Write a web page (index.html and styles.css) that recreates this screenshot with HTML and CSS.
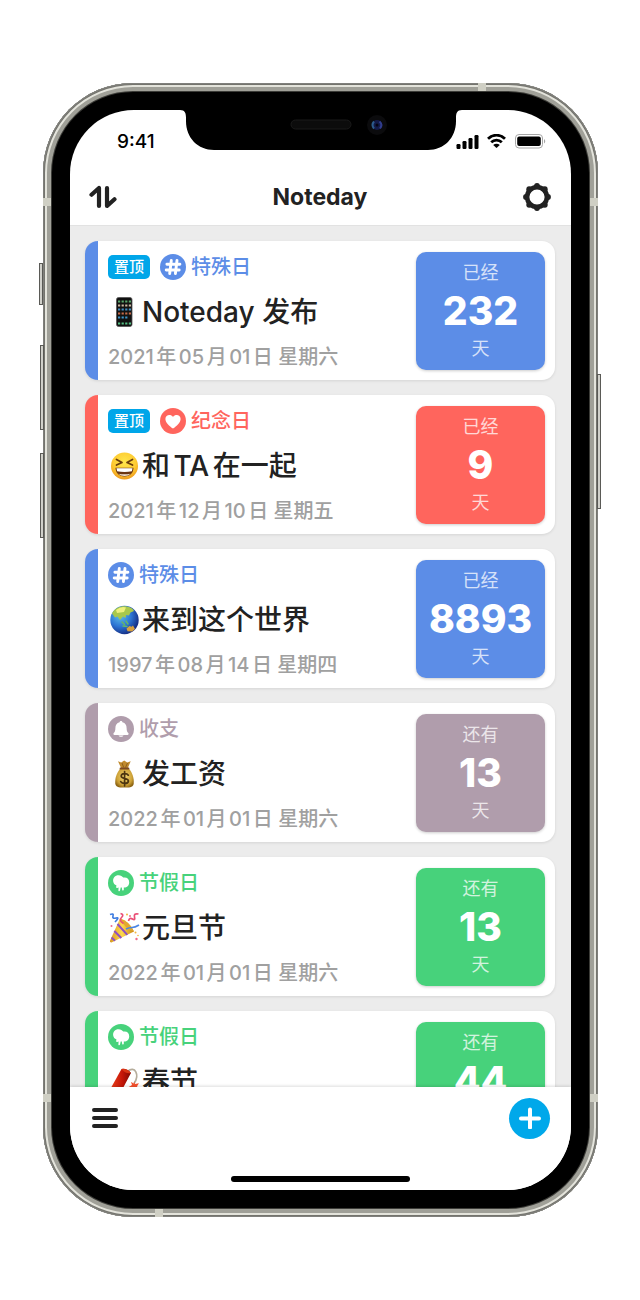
FILE: index.html
```html
<!DOCTYPE html>
<html lang="zh-CN">
<head>
<meta charset="utf-8">
<meta name="viewport" content="width=device-width, initial-scale=1">
<title>Noteday</title>
<link rel="stylesheet" href="styles.css">
</head>
<body>
<svg class="sprite" aria-hidden="true">
  <symbol id="i-hash" viewBox="0 0 26 26">
    <circle cx="13" cy="13" r="13" fill="currentColor"/>
    <path d="M11.3 6.5 9.7 19.5M17 6.5 15.4 19.5M6.900 10.200h13M6.200 16h13" stroke="#fff" stroke-width="2.900" stroke-linecap="round" fill="none"/>
  </symbol>
  <symbol id="i-heart" viewBox="0 0 26 26">
    <circle cx="13" cy="13" r="13" fill="currentColor"/>
    <path d="M13 20.6C9.5 18 5.4 14.6 5.4 10.9c0-4.3 5.4-5.2 7.6-2 2.2-3.2 7.6-2.3 7.6 2 0 3.700-4.100 7.100-7.600 9.700z" fill="#fff"/>
  </symbol>
  <symbol id="i-bell" viewBox="0 0 26 26">
    <circle cx="13" cy="13" r="13" fill="currentColor"/>
    <path d="M11.600 6.300c0-1.600 2.800-1.600 2.800 0 3.100.8 4.200 3 4.200 5.700 0 2.900.6 4 1.700 5.100.7.900.3 1.800-.8 1.800h-13c-1.100 0-1.500-.9-.8-1.800 1.100-1.100 1.700-2.200 1.700-5.100 0-2.700 1.100-4.900 4.200-5.700z" fill="#fff"/>
    <path d="M10.500 19.400h5c-.4 1.800-4.600 1.800-5 0z" fill="#fff"/>
  </symbol>
  <symbol id="i-balloon" viewBox="0 0 26 26">
    <circle cx="13" cy="13" r="13" fill="currentColor"/>
    <path d="M5.200 11.500C4.600 7.800 7.400 5 10.700 5.200c2 .1 3.700 1 4.500 2.400 3.600-.7 6 1.400 6 4.600 0 3.400-2.400 5.600-5.400 5.400v2.200c0 1-1.500 1-1.600.1l-.4-2.500-1.100.1-.7 3c-.3 1-1.700.8-1.600-.3l.2-2.600-.8.200c-.8.600-1.800.1-1.600-1l.2-1.500C6.600 14.700 5.500 13.400 5.200 11.500z" fill="#fff"/>
  </symbol>
</svg>

<div class="phone">
  <i class="band band-left band-upper"></i><i class="band band-right band-upper"></i>
  <i class="band band-left band-lower"></i><i class="band band-right band-lower"></i>
  <i class="band band-top"></i><i class="band band-bottom"></i>
  <i class="side mute"></i><i class="side volume-up"></i><i class="side volume-down"></i><i class="side power"></i>

  <div class="screen">
    <svg class="notch" viewBox="0 0 282 41" aria-hidden="true">
      <path d="M0 0v1C5 1 6 4 6 9v3c0 17 12 29 28 29h214c16 0 28-12 28-29V9c0-5 1-8 6-8V0z"/>
      <rect x="111" y="11" width="60" height="9" rx="4.500" fill="#0c0c0c" stroke="#1a1a1a"/>
      <circle cx="197" cy="16" r="10" fill="#0b0b0d"/>
      <circle cx="197" cy="16" r="5" fill="#131a48"/>
      <path d="M194 12.500q-3 3.500 0 7" stroke="#2c5b8c" stroke-width="2" fill="none"/>
      <path d="M199.500 12.500q3.500 3 .5 7" stroke="#303c8c" stroke-width="2" fill="none"/>
      <circle cx="197" cy="16" r="1.500" fill="#050510"/>
    </svg>

    <header class="top">
      <div class="status">
        <time>9:41</time>
        <div class="status-icons">
          <svg width="23" height="15" viewBox="0 0 23 15" aria-hidden="true">
            <rect x="0.500" y="10" width="4" height="5" rx="1.200"/><rect x="6.500" y="7" width="4" height="8" rx="1.200"/><rect x="12.500" y="4" width="4" height="11" rx="1.200"/><rect x="18.500" y="1" width="4" height="14" rx="1.200"/>
          </svg>
          <svg width="20" height="15" viewBox="0 0 20 15" aria-hidden="true">
            <path d="M1 4.800C6 0 13 0 18 4.800M4.200 8.300c3-2.900 7.600-2.900 10.600 0" fill="none" stroke="#000" stroke-width="2.800"/>
            <path d="M9.500 14 6.200 10.900c1.900-1.700 4.700-1.700 6.600 0z"/>
          </svg>
          <svg width="31" height="15" viewBox="0 0 31 15" aria-hidden="true">
            <rect x=".5" y=".5" width="27" height="13.500" rx="3.500" fill="none" stroke="#a6a6a6"/>
            <rect x="2.200" y="2.400" width="23.600" height="9.700" rx="2"/>
            <path d="M29 5c1.700.7 1.700 3.700 0 4.400z" fill="#a6a6a6"/>
          </svg>
        </div>
      </div>
      <nav class="bar">
        <button type="button" aria-label="排序">
          <svg width="28" height="24" viewBox="0 0 28 24" fill="none" stroke="#222" stroke-width="4.200" stroke-linecap="round" stroke-linejoin="round"><path d="M2.500 9.700 10 3v18M18 3v18l7.500-6.700"/></svg>
        </button>
        <h1>Noteday</h1>
        <button type="button" aria-label="设置">
          <svg width="28" height="28" viewBox="0 0 28 28" fill="#222"><circle cx="14" cy="14" r="9.900" fill="none" stroke="#222" stroke-width="4.600"/><circle cx="14" cy="3" r="2.900"/><circle cx="21.800" cy="6.200" r="2.900"/><circle cx="25" cy="14" r="2.900"/><circle cx="21.800" cy="21.800" r="2.900"/><circle cx="14" cy="25" r="2.900"/><circle cx="6.200" cy="21.800" r="2.900"/><circle cx="3" cy="14" r="2.900"/><circle cx="6.200" cy="6.200" r="2.900"/></svg>
        </button>
      </nav>
    </header>

    <main class="list">
      <article class="card blue">
        <div class="info">
          <div class="meta"><span class="pin">置顶</span><svg class="kind"><use href="#i-hash"/></svg><span>特殊日</span></div>
          <h2>
            <svg class="emoji" viewBox="0 0 32 32" role="img" aria-label="手机"><rect x="8.500" y="1.500" width="15.500" height="29" rx="2" fill="#111" stroke="#555" stroke-width=".8"/>
              <g stroke-width="2.200" stroke-dasharray="2.200 1.400"><path d="M10 5.500h13" stroke="#58a66a"/><path d="M10 9.500h13" stroke="#ccb9a2"/><path d="M10 13.500h13" stroke="#438ec4"/><path d="M10 17.500h13" stroke="#c66b49"/><path d="M10 21.500h10" stroke="#3e95ca"/><path d="M10 27.500h13" stroke="#54bf83"/></g></svg>
            <span>Noteday 发布</span></h2>
          <p>2021年05月01日 星期六</p>
        </div>
        <div class="count"><span>已经</span><strong>232</strong><span>天</span></div>
      </article>

      <article class="card red">
        <div class="info">
          <div class="meta"><span class="pin">置顶</span><svg class="kind"><use href="#i-heart"/></svg><span>纪念日</span></div>
          <h2>
            <svg class="emoji" viewBox="0 0 32 32" role="img" aria-label="大笑"><defs><radialGradient id="face" cx=".5" cy=".35" r=".65"><stop offset="0" stop-color="#ffe64c"/><stop offset=".65" stop-color="#fecb32"/><stop offset="1" stop-color="#ee9a1c"/></radialGradient></defs><circle cx="16.500" cy="16" r="13.500" fill="url(#face)"/><path d="m8.500 9.500 5.500 3-5.500 2.600M24.500 9.500l-5.500 3 5.500 2.600" fill="none" stroke="#6b3c0c" stroke-width="1.700" stroke-linecap="round" stroke-linejoin="round"/><path d="M7.500 17.800h18c0 5-3.500 8.700-9 8.700s-9-3.700-9-8.700z" fill="#6b3511"/><path d="M8.500 18.300h16l-.6 3q-7.400 1.500-14.800 0z" fill="#fff"/><path d="M10.500 23.700q6 1 12 0-2 2.200-6 2.200t-6-2.200z" fill="#f3e3d2"/></svg>
            <span>和TA在一起</span></h2>
          <p>2021年12月10日 星期五</p>
        </div>
        <div class="count"><span>已经</span><strong>9</strong><span>天</span></div>
      </article>

      <article class="card blue">
        <div class="info">
          <div class="meta"><svg class="kind"><use href="#i-hash"/></svg><span>特殊日</span></div>
          <h2>
            <svg class="emoji" viewBox="0 0 32 32" role="img" aria-label="地球"><defs><radialGradient id="sea" cx=".35" cy=".35" r=".7"><stop offset="0" stop-color="#5fc1e8"/><stop offset=".55" stop-color="#2c74d4"/><stop offset="1" stop-color="#142a80"/></radialGradient></defs><circle cx="16.500" cy="16" r="14.200" fill="url(#sea)"/><path d="M4 9.500C7 3.800 13 1.500 19 2.500c4 .7 6 2.500 7 4.500l-3.500 1.500-1.500 3-3-.5-.5 3-2.500-1.500-3 3.500-2.500-3.500-2.500 1z" fill="#a8c84b"/><path d="M8 6q5-4 10-2.500L16 8l-7 1z" fill="#eef07c"/><path d="m14 18 2.500 2.500M18 17l2 3M15 22l4 .5" stroke="#64b56b" stroke-width="1.500" stroke-linecap="round"/><path d="m18.500 24.500 3-2.500 2 .8 1.500-1.300 2 3.500-3 2.500-4.500-.3z" fill="#d6a03f"/></svg>
            <span>来到这个世界</span></h2>
          <p>1997年08月14日 星期四</p>
        </div>
        <div class="count"><span>已经</span><strong>8893</strong><span>天</span></div>
      </article>

      <article class="card mauve">
        <div class="info">
          <div class="meta"><svg class="kind"><use href="#i-bell"/></svg><span>收支</span></div>
          <h2>
            <svg class="emoji" viewBox="0 0 32 32" role="img" aria-label="钱袋"><defs><radialGradient id="gold" cx=".5" cy=".45" r=".6"><stop offset="0" stop-color="#f2d774"/><stop offset=".7" stop-color="#cda137"/><stop offset="1" stop-color="#8a6110"/></radialGradient></defs><path d="m10 3.200 3.200 1.300 3-2 3 2 3.500-1.300-3 7h-6.500z" fill="#c08a2d"/><path d="m14 5 1.700 4.500M19.500 5l-2 4.500" stroke="#7d5315" stroke-width=".8"/><path d="M13.300 9.800h6.600c4.300 3.800 6.300 10 5.800 15.700-.4 3.400-2.600 4.100-9.200 4.100S7.700 29 7.300 25.500C6.800 19.800 9 13.600 13.300 9.800z" fill="url(#gold)"/><path d="M12.500 10.500h8" stroke="#7c4921" stroke-width="1.800" stroke-linecap="round"/><path d="M20.300 17.200c-1.500-2.400-7-2.100-7.100.8-.1 3.600 7.400 1.400 7.200 5.100-.2 3-6 3.100-7.700.5M16.600 13.600v14.200" stroke="#4c3510" stroke-width="1.700" fill="none" stroke-linecap="round"/></svg>
            <span>发工资</span></h2>
          <p>2022年01月01日 星期六</p>
        </div>
        <div class="count"><span>还有</span><strong>13</strong><span>天</span></div>
      </article>

      <article class="card green">
        <div class="info">
          <div class="meta"><svg class="kind"><use href="#i-balloon"/></svg><span>节假日</span></div>
          <h2>
            <svg class="emoji" viewBox="0 0 32 32" role="img" aria-label="派对"><defs><linearGradient id="cone"><stop offset="0" stop-color="#d79a21"/><stop offset=".5" stop-color="#ffd94e"/><stop offset="1" stop-color="#c98717"/></linearGradient></defs><path d="M12 6.500Q21 9 26 19.500L3.500 30.500q-2 .2-1.500-1.800z" fill="url(#cone)"/><path d="m9.500 12 9.800 10.800M6.300 19l7 7M3.500 25.500l3.500 3.200" stroke="#8e4fc4" stroke-width="2"/><path d="M12 6.500Q21 9 26 19.500q-9-2.500-14-13z" fill="#e2a82e"/><path d="M2 2.500q4-1.500 3 1.500t3 2-1 4" stroke="#3f7de0" stroke-width="1.700" fill="none"/><path d="M12.500 1.500q4 1 1 4t2 6M20.500 9q1-4 4-2t2-2 4-3" stroke="#ea4e76" stroke-width="1.700" fill="none"/><path d="M18 17q3-1.500 6-1.500t7-2.500" stroke="#4a86e4" stroke-width="1.700" fill="none"/><g fill="#ef6a8a"><circle cx="3.500" cy="14" r="1"/><circle cx="22" cy="4" r="1"/><circle cx="28.500" cy="27" r="1.200"/></g><g fill="#f3b53f"><circle cx="27.500" cy="20.500" r="1"/><circle cx="19" cy="2.500" r="1"/><circle cx="30" cy="23.500" r=".8"/></g></svg>
            <span>元旦节</span></h2>
          <p>2022年01月01日 星期六</p>
        </div>
        <div class="count"><span>还有</span><strong>13</strong><span>天</span></div>
      </article>

      <article class="card green">
        <div class="info">
          <div class="meta"><svg class="kind"><use href="#i-balloon"/></svg><span>节假日</span></div>
          <h2>
            <svg class="emoji" viewBox="0 0 32 32" role="img" aria-label="鞭炮"><defs><linearGradient id="tube"><stop offset="0" stop-color="#f0451c"/><stop offset=".6" stop-color="#c41508"/><stop offset="1" stop-color="#7c0903"/></linearGradient></defs><path d="M19.500 5.500C27-1 32 9 26 17.500" stroke="#b5ad9c" stroke-width="1.700" fill="none"/><path d="M13.500 3q5-1 9.500 4L11 29.500q-6 .5-9.500-5z" fill="url(#tube)"/><path d="M13.500 3q5-1 9.500 4-5 1.500-9.500-4z" fill="#d93414"/><path d="m26 15 1 3 4-.8-2 3 2 3-4-.8-2 3-.6-3.700-4-.5 3.600-2.200-1-3 3 1.500z" fill="#f5502c"/></svg>
            <span>春节</span></h2>
          <p>2022年02月01日 星期二</p>
        </div>
        <div class="count"><span>还有</span><strong>44</strong><span>天</span></div>
      </article>
    </main>

    <footer class="bottom">
      <div class="actions">
        <button type="button" aria-label="菜单">
          <svg width="26" height="22" viewBox="0 0 26 22" stroke="#222" stroke-width="4" stroke-linecap="round"><path d="M2 3h22M2 11h22M2 19h22"/></svg>
        </button>
        <button type="button" class="add" aria-label="添加">
          <svg width="22" height="22" viewBox="0 0 22 22" stroke="#fff" stroke-width="4" stroke-linecap="round"><path d="M2 11.500h18M11 2.500v18"/></svg>
        </button>
      </div>
      <div class="home"></div>
    </footer>
  </div>
</div>
</body>
</html>
```

FILE: styles.css
```css
* { box-sizing: border-box; }

body {
  margin: 0;
  height: 100vh;
  padding: 83px 42px 83px 43px;
  display: flex;
  background: #fff;
  color: #222;
  font-family: Inter, "Noto Sans CJK SC", sans-serif;
  text-autospace: normal;
}

h1, h2, p { margin: 0; }

button {
  display: flex;
  align-items: center;
  justify-content: center;
  padding: 0;
  border: 0;
  background: none;
  cursor: pointer;
}

svg { display: block; flex: none; }

.sprite { position: absolute; width: 0; height: 0; }

/* Device */
.phone {
  position: relative;
  flex: 1;
  min-width: 0;
  padding: 27px;
  border-radius: 90px;
  background: #000;
  box-shadow:
    inset 0 0 0 1px #80807c,
    inset 0 0 0 2px #74746e,
    inset 0 0 0 4px #e4e4dc,
    inset 0 0 0 8px #a0a098,
    inset 0 0 0 9px #3c3c38;
}

.screen {
  position: relative;
  height: 100%;
  display: flex;
  flex-direction: column;
  overflow: hidden;
  border-radius: 64px;
  background: #fff;
}

.band { position: absolute; background: #cfcfc4; }
.band-left, .band-right { width: 8px; height: 8px; }
.band-left { left: 0; }
.band-right { right: 0; }
.band-upper { top: 115px; }
.band-lower { bottom: 115px; }
.band-top, .band-bottom { width: 8px; height: 8px; }
.band-top { top: 0; right: 112px; }
.band-bottom { bottom: 0; left: 112px; }

.side {
  position: absolute;
  width: 4px;
  border: 1px solid #5a5a56;
  background: #d0d0ca;
}
.mute { left: -4px; top: 180px; height: 42px; }
.volume-up { left: -3px; top: 262px; height: 85px; }
.volume-down { left: -3px; top: 370px; height: 85px; }
.power { right: -3px; top: 291px; height: 135px; }

.notch {
  position: absolute;
  top: -1px;
  left: 50%;
  width: 282px;
  height: 41px;
  margin-left: -141px;
}

/* Header */
.top { border-bottom: 1px solid #e2e2e2; }

.status {
  height: 62px;
  padding: 0 25px 0 47px;
  display: flex;
  align-items: center;
  justify-content: space-between;
  color: #000;
  font-size: 19px;
  font-weight: 500;
}

.status-icons { display: flex; gap: 8px; }

.bar {
  height: 53px;
  padding: 0 20px 4px 19px;
  display: flex;
  align-items: center;
  justify-content: space-between;
}

h1 { font-size: 23px; font-weight: 700; line-height: 28px; }

/* Event list */
.list {
  flex: 1;
  min-height: 0;
  padding: 15px 16px 15px 15px;
  display: flex;
  flex-direction: column;
  gap: 15px;
  overflow-y: auto;
  scrollbar-width: none;
  background: #ececec;
}

.card {
  flex: none;
  display: flex;
  align-items: center;
  padding-right: 10px;
  border-left: 13px solid var(--tone);
  border-radius: 13px;
  background: #fff;
  box-shadow: 0 1px 3px #0000001a;
}

.blue { --tone: #5c8de7; }
.red { --tone: #ff655d; }
.mauve { --tone: #b09dac; }
.green { --tone: #47d27b; }

.info {
  flex: 1;
  min-width: 0;
  padding: 13px 0 10px 10px;
  display: flex;
  flex-direction: column;
  gap: 14px;
}

.meta {
  height: 26px;
  display: flex;
  align-items: center;
  gap: 5px;
  color: var(--tone);
  font-size: 20px;
  font-weight: 500;
  line-height: 28px;
}

.pin {
  margin-right: 5px;
  padding: 0 6px;
  border-radius: 5px;
  background: #00a6e9;
  color: #fff;
  font-size: 15px;
  line-height: 24px;
}

.kind { width: 26px; height: 26px; }

h2 {
  display: flex;
  align-items: center;
  gap: 2px;
  font-size: 28px;
  font-weight: 500;
  line-height: 36px;
  white-space: nowrap;
}

.emoji { width: 32px; height: 32px; }

.info p {
  color: #a0a0a0;
  font-size: 20px;
  font-weight: 500;
  line-height: 26px;
  white-space: nowrap;
}

.count {
  width: 129px;
  padding: 9px 0;
  display: flex;
  flex-direction: column;
  align-items: center;
  border-radius: 10px;
  background: var(--tone);
  box-shadow: 0 1px 3px #0003;
  color: #fff;
}

.count span { font-size: 18px; line-height: 24px; opacity: .75; }
.count strong { font-size: 39px; font-weight: 800; line-height: 52px; }

/* Toolbar */
.bottom {
  position: relative;
  height: 103px;
  padding-bottom: 8px;
  display: flex;
  flex-direction: column;
  justify-content: space-between;
  background: #fff;
  box-shadow: 0 -1px 3px #0002;
}

.actions {
  height: 62px;
  padding: 0 21px 0 22px;
  display: flex;
  align-items: center;
  justify-content: space-between;
}

.add {
  width: 41px;
  height: 41px;
  border-radius: 50%;
  background: #00a8ea;
}

.home {
  width: 179px;
  height: 6px;
  align-self: center;
  border-radius: 3px;
  background: #000;
}
```
